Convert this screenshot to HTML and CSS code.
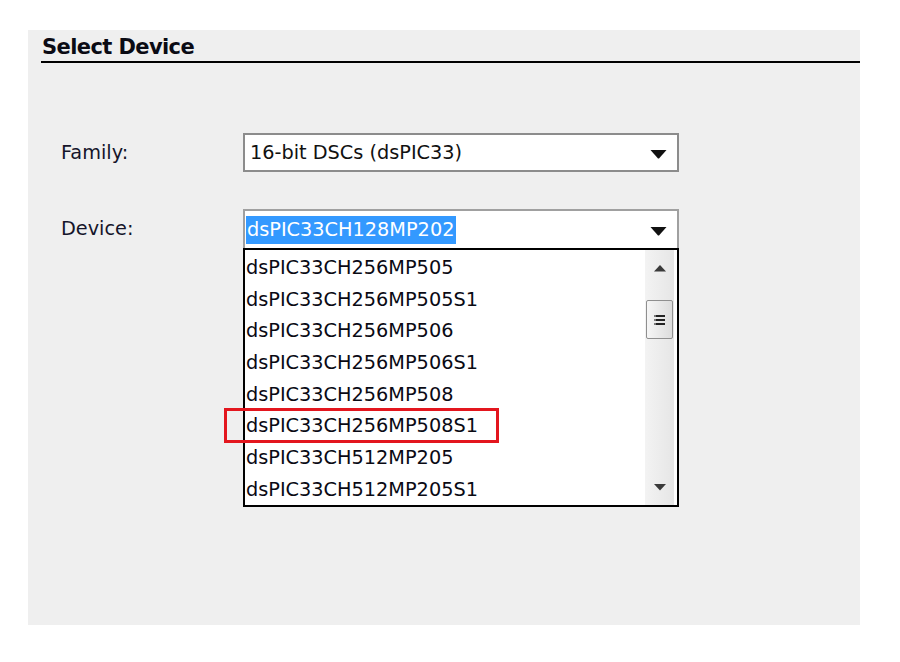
FILE: index.html
```html
<!DOCTYPE html>
<html>
<head>
<meta charset="utf-8">
<link rel="stylesheet" href="styles.css">
</head>
<body>
<div class="panel">
  <div class="header">
    <h1 class="title">Select Device</h1>
    <div class="rule"></div>
  </div>
  <div class="form">
    <div class="row">
      <div class="label">Family:</div>
      <div class="combo">
        <span class="value">16-bit DSCs (dsPIC33)</span>
        <svg class="arrow" width="17" height="10" viewBox="0 0 17 10"><path d="M0.5 1 L16.5 1 L9 9.5 L8 9.5 Z" fill="#111"/></svg>
      </div>
    </div>
    <div class="row row-device">
      <div class="label">Device:</div>
      <div class="device">
        <div class="combo combo-open">
          <span class="value selected">dsPIC33CH128MP202</span>
          <svg class="arrow" width="17" height="10" viewBox="0 0 17 10"><path d="M0.5 1 L16.5 1 L9 9.5 L8 9.5 Z" fill="#111"/></svg>
        </div>
        <div class="list">
          <div class="items">
            <div class="item">dsPIC33CH256MP505</div>
            <div class="item">dsPIC33CH256MP505S1</div>
            <div class="item">dsPIC33CH256MP506</div>
            <div class="item">dsPIC33CH256MP506S1</div>
            <div class="item">dsPIC33CH256MP508</div>
            <div class="item">dsPIC33CH256MP508S1</div>
            <div class="item">dsPIC33CH512MP205</div>
            <div class="item">dsPIC33CH512MP205S1</div>
          </div>
          <div class="scrollbar">
            <div class="sb-btn">
              <svg width="14" height="8" viewBox="0 0 14 8"><path d="M1 7.5 L7 1 L13 7.5 Z" fill="#3a3a3a"/></svg>
            </div>
            <div class="track">
              <div class="thumb">
                <svg width="14" height="14" viewBox="0 0 14 14"><path d="M3 3 H12 M3 7 H12 M3 11 H12" stroke="#222" stroke-width="1.8"/><circle cx="2" cy="3" r="1" fill="#555"/><circle cx="2" cy="7" r="1" fill="#555"/><circle cx="2" cy="11" r="1" fill="#555"/></svg>
              </div>
            </div>
            <div class="sb-btn">
              <svg width="14" height="8" viewBox="0 0 14 8"><path d="M1 1 L13 1 L7 7.5 Z" fill="#3a3a3a"/></svg>
            </div>
          </div>
          <div class="highlight"></div>
        </div>
      </div>
    </div>
  </div>
</div>
</body>
</html>
```

FILE: styles.css
```css
html, body {
  margin: 0;
  padding: 0;
  background: #ffffff;
}

body {
  font-family: "DejaVu Sans", Verdana, sans-serif;
  color: #111;
  width: 900px;
  height: 662px;
  overflow: hidden;
}

.panel {
  margin: 30px 0 0 28px;
  width: 832px;
  height: 595px;
  background: #efefef;
  box-sizing: border-box;
}

.header {
  padding: 6px 0 0 13px;
}

.title {
  margin: 0;
  padding-left: 1px;
  font-size: 21px;
  font-weight: bold;
  line-height: 22px;
  color: #0b0b14;
  letter-spacing: -0.6px;
}

.rule {
  margin-top: 3px;
  height: 2px;
  background: #000;
  box-shadow: 0 -5px 0 -1px #dcdcdc, 0 5px 0 -1px #dcdcdc;
}

.form {
  padding: 70px 0 0 33px;
}

.row {
  display: flex;
  align-items: flex-start;
}

.row-device {
  margin-top: 37px;
}

.label {
  width: 182px;
  font-size: 19.3px;
  line-height: 39px;
  color: #15152a;
}

.combo {
  width: 436px;
  height: 39px;
  box-sizing: border-box;
  border: 2px solid #8c8c8c;
  background: #fff;
  display: flex;
  align-items: center;
  justify-content: space-between;
  padding: 0 10px 0 5px;
}

.combo-open {
  border-color: #a0a0a0;
  border-bottom: none;
  padding-left: 1px;
}

.value {
  font-size: 19.3px;
  line-height: 28px;
}

.selected {
  background: #3399ff;
  color: #fff;
  padding: 0 2px 0 1px;
  margin-top: 1px;
}

.arrow {
  display: block;
  margin-top: 2px;
}

.device {
  width: 436px;
}

.list {
  position: relative;
  height: 259px;
  box-sizing: border-box;
  border: 2px solid #000;
  background: #fff;
  display: flex;
}

.items {
  flex: 1;
  padding-top: 2px;
}

.item {
  height: 31.7px;
  line-height: 31px;
  font-size: 19.3px;
  padding-left: 1px;
  color: #0a0a14;
}

.scrollbar {
  width: 29px;
  margin-right: 3px;
  background: linear-gradient(to right, #f3f3f3, #e6e6e6);
  display: flex;
  flex-direction: column;
}

.sb-btn {
  height: 28px;
  display: flex;
  align-items: center;
  justify-content: center;
  padding-top: 4px;
}

.sb-btn:last-child {
  padding-top: 0;
  padding-bottom: 4px;
}

.track {
  flex: 1;
  padding-top: 18px;
}

.thumb {
  margin: 0 1px;
  height: 39px;
  box-sizing: border-box;
  border: 1px solid #8f8f8f;
  border-radius: 2px;
  background: linear-gradient(to right, #f6f6f6, #dcdcdc);
  display: flex;
  align-items: center;
  justify-content: center;
}

.highlight {
  position: absolute;
  left: -21px;
  top: 158px;
  width: 275px;
  height: 35px;
  box-sizing: border-box;
  border: 3px solid #e3161e;
}
```
